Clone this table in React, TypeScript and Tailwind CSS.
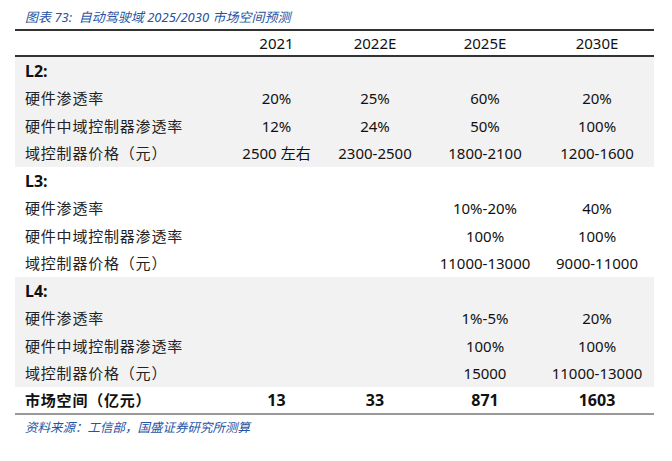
import React from "react";

type Row = { label: string; values: string[] };
type Group = { title: string; rows: Row[]; shaded: boolean };

const cols = "grid grid-cols-[218px_87px_110px_110px_114px]";
const latin = "font-['Noto_Sans','Noto_Sans_CJK_SC',sans-serif]";
const cjk = "font-['Noto_Sans_CJK_SC',sans-serif]";

const groups: Group[] = [
  {
    title: "L2:",
    shaded: true,
    rows: [
      { label: "硬件渗透率", values: ["20%", "25%", "60%", "20%"] },
      { label: "硬件中域控制器渗透率", values: ["12%", "24%", "50%", "100%"] },
      { label: "域控制器价格（元）", values: ["2500 左右", "2300-2500", "1800-2100", "1200-1600"] },
    ],
  },
  {
    title: "L3:",
    shaded: false,
    rows: [
      { label: "硬件渗透率", values: ["", "", "10%-20%", "40%"] },
      { label: "硬件中域控制器渗透率", values: ["", "", "100%", "100%"] },
      { label: "域控制器价格（元）", values: ["", "", "11000-13000", "9000-11000"] },
    ],
  },
  {
    title: "L4:",
    shaded: true,
    rows: [
      { label: "硬件渗透率", values: ["", "", "1%-5%", "20%"] },
      { label: "硬件中域控制器渗透率", values: ["", "", "100%", "100%"] },
      { label: "域控制器价格（元）", values: ["", "", "15000", "11000-13000"] },
    ],
  },
];

const Cell = ({ v }: { v: string }) => {
  const [num, rest] = v.split(" ");
  return (
    <div className={`flex items-center justify-center text-[15px] text-[#111] ${latin}`}>
      {num}
      {rest && <span className={`ml-1 ${cjk}`}>{rest}</span>}
    </div>
  );
};

export default function App() {
  return (
    <div className="w-[672px] h-[461px] bg-white">
      <div
        className={`h-[29px] pl-[25px] pt-[8px] text-[13px] italic text-[#2553a3] ${latin}`}
      >
        图表 73:&nbsp; 自动驾驶域 2025/2030 市场空间预测
      </div>

      <div className="ml-[15px] w-[639px]">
        <div className={`${cols} h-[28px] border-t-2 border-b-2 border-[#333]`}>
          <div />
          {["2021", "2022E", "2025E", "2030E"].map((y) => (
            <Cell key={y} v={y} />
          ))}
        </div>

        {groups.map((g) => (
          <div key={g.title} className={g.shaded ? "bg-[#f2f2f2]" : "bg-white"}>
            <div className={`${cols} h-[27.5px]`}>
              <div className={`flex items-center pl-[10px] text-[16px] font-bold text-[#111] ${latin}`}>
                {g.title}
              </div>
            </div>
            {g.rows.map((r) => (
              <div key={r.label} className={`${cols} h-[27.5px]`}>
                <div className={`flex items-center pl-[10px] text-[15px] tracking-[0.8px] text-[#222] ${cjk}`}>
                  {r.label}
                </div>
                {r.values.map((v, i) => (
                  <Cell key={i} v={v} />
                ))}
              </div>
            ))}
          </div>
        ))}

        <div className={`${cols} h-[28px] border-b-2 border-[#999] font-bold`}>
          <div className={`flex items-center pl-[10px] text-[15px] tracking-[0.8px] text-[#111] ${cjk}`}>
            市场空间（亿元）
          </div>
          {["13", "33", "871", "1603"].map((v) => (
            <div key={v} className={`flex items-center justify-center text-[16px] text-[#111] ${latin}`}>
              {v}
            </div>
          ))}
        </div>
      </div>

      <div className={`pl-[25px] pt-[3px] text-[12.5px] italic text-[#2553a3] ${cjk}`}>
        资料来源：工信部，国盛证券研究所测算
      </div>
    </div>
  );
}
